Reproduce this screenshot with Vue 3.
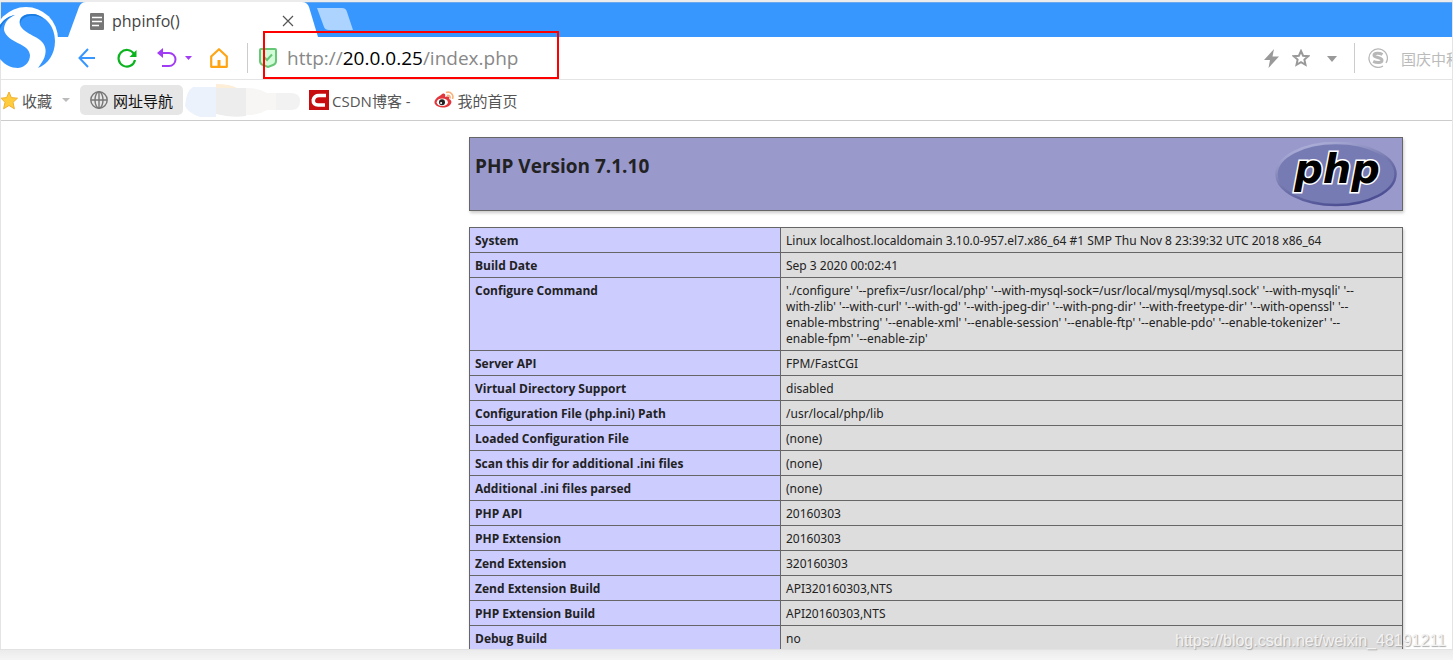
<script setup>
const rows = [
  ['System', 'Linux localhost.localdomain 3.10.0-957.el7.x86_64 #1 SMP Thu Nov 8 23:39:32 UTC 2018 x86_64'],
  ['Build Date', 'Sep 3 2020 00:02:41'],
  [
    'Configure Command',
    "'./configure' '--prefix=/usr/local/php' '--with-mysql-sock=/usr/local/mysql/mysql.sock' '--with-mysqli' '--\n" +
      "with-zlib' '--with-curl' '--with-gd' '--with-jpeg-dir' '--with-png-dir' '--with-freetype-dir' '--with-openssl' '--\n" +
      "enable-mbstring' '--enable-xml' '--enable-session' '--enable-ftp' '--enable-pdo' '--enable-tokenizer' '--\n" +
      "enable-fpm' '--enable-zip'",
  ],
  ['Server API', 'FPM/FastCGI'],
  ['Virtual Directory Support', 'disabled'],
  ['Configuration File (php.ini) Path', '/usr/local/php/lib'],
  ['Loaded Configuration File', '(none)'],
  ['Scan this dir for additional .ini files', '(none)'],
  ['Additional .ini files parsed', '(none)'],
  ['PHP API', '20160303'],
  ['PHP Extension', '20160303'],
  ['Zend Extension', '320160303'],
  ['Zend Extension Build', 'API320160303,NTS'],
  ['PHP Extension Build', 'API20160303,NTS'],
  ['Debug Build', 'no'],
]
</script>

<template>
  <div class="window">
    <header class="chrome">
      <svg class="logo" width="60" height="66" viewBox="0 5 60 66" aria-hidden="true">
        <circle cx="26" cy="39" r="32" fill="#fff" />
        <path d="M20 25C18 17 24 14 32 14C46 15 55 27 55 41C55 54 48 64 38 68C44 60 47 54 45 47C42 36 24 35 20 25Z" fill="#3897ff" />
        <path d="M20 24C19 17 25 14 32 14C37 14 41 16 44 19C36 14 22 14 20 24Z" fill="#1a7be0" />
        <path d="M15 15C9 16 4 19 0 25V59C5 65 11 68 18 68C26 67 30 61 30 55C29 43 7 43 4 30C4 23 8 18 15 15Z" fill="#3897ff" />
        <path d="M15 15C9 16 4 19 0 25V29C3 22 8 17 15 15Z" fill="#1a7be0" />
      </svg>
      <div class="tabs">
        <svg class="tab-shape" width="250" height="35" viewBox="0 0 250 35" aria-hidden="true">
          <path d="M0 35L11 5Q13 0 18 0H234Q239 0 241 5L250 35Z" fill="#fff" />
        </svg>
        <div class="tab">
          <svg width="14" height="17" viewBox="0 0 14 17" aria-hidden="true">
            <rect width="14" height="17" rx="1" fill="#777" />
            <path d="M2 4.5H12M2 8.5H12M2 12.5H9" stroke="#fff" stroke-width="1.5" />
          </svg>
          <span class="tab-title">phpinfo()</span>
          <button class="plain" aria-label="Close tab">
            <svg width="12" height="12" viewBox="0 0 12 12"><path d="M1 1L11 11M11 1L1 11" stroke="#555" stroke-width="1.2" /></svg>
          </button>
        </div>
        <button class="plain new-tab" aria-label="New tab">
          <svg width="36" height="22" viewBox="0 0 36 22"><path d="M0 0H25Q29 0 30 4L36 22H12Q8 22 7 19Z" fill="#add3ff" /></svg>
        </button>
      </div>

      <div class="toolbar">
        <button class="plain back" aria-label="Back">
          <svg width="18" height="20" viewBox="0 0 18 20"><path d="M10 1L1.5 10L10 19M1.5 10H17" fill="none" stroke="#3897ff" stroke-width="2" /></svg>
        </button>
        <button class="plain reload" aria-label="Reload">
          <svg width="20" height="20" viewBox="0 0 20 20"><path d="M17 6A8.3 8.3 0 1 0 18 12" fill="none" stroke="#0bb41f" stroke-width="2.2" /><path d="M19.5 2V9H12.5Z" fill="#0bb41f" /></svg>
        </button>
        <button class="plain undo" aria-label="Undo">
          <svg width="20" height="20" viewBox="0 0 20 20"><path d="M4 5H12A6 6 0 0 1 12 18H5" fill="none" stroke="#a13cf5" stroke-width="2" /><path d="M0 5L6 0V10Z" fill="#a13cf5" /></svg>
        </button>
        <button class="plain undo-more" aria-label="Undo list">
          <svg width="7" height="4" viewBox="0 0 7 4"><path d="M0 0H7L3.5 4Z" fill="#a13cf5" /></svg>
        </button>
        <button class="plain home" aria-label="Home">
          <svg width="18" height="20" viewBox="0 0 18 20"><path d="M1.2 8.5L9 1.2L16.8 8.5V18.8H1.2Z" fill="none" stroke="#ffa514" stroke-width="2.2" stroke-linejoin="round" /><path d="M9 12V18" stroke="#ffa514" stroke-width="3" /></svg>
        </button>
        <i class="divider"></i>
        <svg class="shield" width="18" height="20" viewBox="0 0 18 20" aria-hidden="true">
          <path d="M1 2Q1 1 2 1H16Q17 1 17 2V13Q17 16 14 17L9 19L4 17Q1 16 1 13Z" fill="#d2fbd8" stroke="#67c777" stroke-width="2" />
          <path d="M5 9L8 12L13 6.5" fill="none" stroke="#67c777" stroke-width="2" />
        </svg>
        <div class="url">http://<b>20.0.0.25</b>/index.php</div>
        <div class="tools">
          <svg width="15" height="19" viewBox="0 0 15 19" aria-hidden="true"><path d="M10 0L0 11H6L4.5 19L15 7.5H8.5Z" fill="#999" /></svg>
          <button class="plain star" aria-label="Add to favourites">
            <svg width="18" height="18" viewBox="0 0 18 18"><path d="M9 2L11.1 6.7L16.2 7.2L12.4 10.6L13.5 15.8L9 13.1L4.5 15.8L5.6 10.6L1.8 7.2L6.9 6.7Z" fill="none" stroke="#999" stroke-width="2" /></svg>
          </button>
          <button class="plain more" aria-label="More">
            <svg width="10" height="6" viewBox="0 0 10 6"><path d="M0 0H10L5 6Z" fill="#999" /></svg>
          </button>
          <i class="divider"></i>
          <svg class="sogou" width="20" height="20" viewBox="0 0 20 20" aria-hidden="true">
            <path d="M15 18A9.2 9.2 0 1 1 18 15" fill="none" stroke="#b8b8b8" stroke-width="1.3" />
            <path d="M14.5 6.5C12 5 6 4.5 6 7.2C6 10 14 9 14 12.2C14 15.5 8 14.8 5.2 13.4" fill="none" stroke="#b8b8b8" stroke-width="3" />
          </svg>
          <span class="search">国庆中秋</span>
        </div>
        <div class="highlight"></div>
      </div>

      <nav class="bookmarks">
        <button class="plain fav">
          <svg width="18" height="19" viewBox="0 0 18 19" aria-hidden="true"><path d="M8 1L10.4 6.6L16.5 7.2L12 11.3L13.4 17.8L8 14.5L2.6 17.8L4 11.3L0 7.2L5.6 6.6Z" fill="#ffcc3d" stroke="#f0b030" /></svg>
          <span>收藏</span>
          <svg class="fav-caret" width="8" height="4" viewBox="0 0 8 4" aria-hidden="true"><path d="M0 0H8L4 4Z" fill="#bbb" /></svg>
        </button>
        <a class="nav-site" href="#">
          <svg width="18" height="18" viewBox="0 0 18 18" aria-hidden="true"><g fill="none" stroke="#777" stroke-width="1.4"><circle cx="9" cy="9" r="8.2" /><ellipse cx="9" cy="9" rx="4" ry="8.2" /><path d="M9 1V17M1 9H17" /></g></svg>
          <span>网址导航</span>
        </a>
        <svg class="smudge" width="116" height="33" viewBox="0 0 116 33" aria-hidden="true">
          <path d="M8 3H31V33H15Q3 29 0 22Q1 7 8 3Z" fill="#ecf2fc" />
          <path d="M31 0Q45 0 52 4H31Z" fill="#fdeed8" />
          <path d="M31 4H61V32Q46 34 31 30Z" fill="#ededee" />
          <path d="M61 4Q74 4 82 9H91V26H82Q74 31 61 31Z" fill="#f7f6f5" />
          <path d="M91 9H106Q115 9 115 17Q115 26 106 26H91Z" fill="#f2f2f3" />
        </svg>
        <a class="csdn" href="#">
          <svg width="20" height="20" viewBox="0 0 20 20" aria-hidden="true"><rect width="20" height="20" fill="#c80d10" /><path d="M17 5.5H10C6.5 5.5 5 7 4.3 10C4 13.5 6 15 9 15H16" fill="none" stroke="#fff" stroke-width="3.6" /></svg>
          <span>CSDN博客 -</span>
        </a>
        <a class="weibo" href="#">
          <svg width="20" height="18" viewBox="0 0 20 18" aria-hidden="true">
            <path d="M7 4C10 1 12 3 11 6C15 5 16 6 15 8C18 9 18 12 16 14C12 18 3 17 1 13C-1 10 3 6 7 4Z" fill="#e0363c" />
            <ellipse cx="8.3" cy="11.2" rx="5.6" ry="3.8" fill="#fff" />
            <circle cx="8" cy="11.3" r="3" fill="#222" /><circle cx="7.1" cy="12" r="1" fill="#fff" />
            <path d="M12 1.5C17 0 20 4 18.5 8M13 4.5C15.5 4 16.5 5.5 16 7.5" fill="none" stroke="#f8b27c" stroke-width="1.6" />
          </svg>
          <span>我的首页</span>
        </a>
      </nav>
    </header>

    <main class="page">
      <div class="info">
        <div class="banner">
          <h1>PHP Version 7.1.10</h1>
          <svg class="php-logo" width="122" height="65" viewBox="0 0 122 65" role="img" aria-label="PHP logo">
            <defs>
              <linearGradient id="rim" x1="0.2" y1="0" x2="0.7" y2="1">
                <stop offset="0" stop-color="#b2b4dc" />
                <stop offset="0.5" stop-color="#7377ad" />
                <stop offset="1" stop-color="#484a90" />
              </linearGradient>
            </defs>
            <ellipse cx="61" cy="32" rx="59.5" ry="31" fill="#777bb3" stroke="url(#rim)" stroke-width="2.5" />
            <text class="php" x="62" y="41" text-anchor="middle">php</text>
          </svg>
        </div>
        <table>
          <tbody>
            <tr v-for="[name, value] in rows" :key="name">
              <th scope="row">{{ name }}</th>
              <td>{{ value }}</td>
            </tr>
          </tbody>
        </table>
      </div>
    </main>
    <footer class="status"></footer>
    <div class="watermark">https://blog.csdn.net/weixin_48191211</div>
  </div>
</template>

<style>
body {
  margin: 0;
  background: #fff;
}
</style>

<style scoped>
.window {
  position: relative;
  box-sizing: border-box;
  height: 100vh;
  display: flex;
  flex-direction: column;
  overflow: hidden;
  border-top: 2px solid #ececec;
  font-family: "Open Sans", "Noto Sans CJK SC", sans-serif;
}
.plain {
  border: 0;
  padding: 0;
  background: none;
  display: flex;
  align-items: center;
  font: inherit;
  color: inherit;
  flex: none;
}
svg {
  display: block;
  flex: none;
}
.chrome {
  position: relative;
  border-left: 1px solid #e4e4e4;
  border-right: 1px solid #e4e4e4;
}
.logo {
  position: absolute;
  left: -1px;
  top: 3px;
}
.tabs {
  position: relative;
  z-index: -1;
  height: 35px;
  background: #3897ff;
  display: flex;
  padding-left: 67px;
}
.tab-shape {
  position: absolute;
  left: 67px;
  top: 0;
}
.tabs::before {
  content: "";
  position: absolute;
  left: 0;
  top: 0;
  width: 100%;
  border-top: 1px solid #6ba9ee;
}
.tab {
  position: relative;
  box-sizing: border-box;
  width: 249px;
  height: 38px;
  padding: 0 23px 0 22px;
  display: flex;
  align-items: center;
  font-size: 16px;
  color: #444;
}
.tab-title {
  flex: 1;
  padding-left: 8px;
}
.new-tab {
  height: 22px;
  margin-top: 6px;
}
.toolbar {
  position: relative;
  height: 42px;
  display: flex;
  align-items: center;
  border-bottom: 1px solid #e4e4e4;
  padding-left: 77px;
}
.reload {
  margin-left: 21px;
}
.undo {
  margin-left: 20px;
}
.undo-more {
  margin-left: 8px;
}
.home {
  margin-left: 18px;
}
.divider {
  width: 1px;
  height: 30px;
  background: #ccc;
  flex: none;
}
.home + .divider {
  margin-left: 19px;
}
.shield {
  margin-left: 11px;
}
.url {
  margin-left: 10px;
  flex: 1;
  font-size: 19px;
  color: #888;
  white-space: nowrap;
}
.url b {
  font-weight: 400;
  color: #000;
}
.tools {
  display: flex;
  align-items: center;
  width: 188px;
  overflow: hidden;
  flex: none;
}
.star {
  margin-left: 13px;
}
.more {
  margin: 2px 17px 0 17px;
}
.more + .divider {
  margin-right: 13px;
}
.search {
  margin-left: 13px;
  font-size: 15px;
  color: #bbb;
  white-space: nowrap;
}
.highlight {
  position: absolute;
  box-sizing: border-box;
  left: 262px;
  top: -6px;
  width: 296px;
  height: 48px;
  border: 2px solid #f00;
}
.bookmarks {
  height: 40px;
  display: flex;
  align-items: center;
  border-bottom: 1px solid #ccc;
  font-size: 15px;
  color: #555;
  white-space: nowrap;
}
.bookmarks a {
  display: flex;
  align-items: center;
  color: inherit;
  text-decoration: none;
}
.fav span {
  margin-left: 3px;
}
.fav-caret {
  margin-left: 10px;
}
.bookmarks .nav-site {
  box-sizing: border-box;
  height: 30px;
  margin-left: 10px;
  padding: 0 10px;
  gap: 5px;
  border-radius: 5px;
  background: #e6e6e6;
  color: #111;
}
.smudge {
  margin-left: 2px;
}
.bookmarks .csdn {
  margin-left: 8px;
  gap: 3px;
}
.bookmarks .weibo {
  margin-left: 23px;
  gap: 4px;
}
.page {
  flex: 1;
  min-height: 0;
  overflow: hidden;
  padding: 16px 49px 0 468px;
  border-left: 1px solid #e4e4e4;
  border-right: 1px solid #e4e4e4;
  color: #222;
}
.banner {
  box-sizing: border-box;
  height: 74px;
  display: flex;
  justify-content: space-between;
  align-items: flex-start;
  padding: 4px 5px;
  border: 1px solid #666;
  background: #99c;
  box-shadow: 1px 2px 3px #ccc;
}
h1 {
  margin: 12px 0 0;
  font-size: 19px;
  line-height: 24px;
}
.php-logo {
  overflow: visible;
}
.php {
  font: italic 700 40px "DejaVu Sans", sans-serif;
  fill: #000;
  stroke: #fff;
  stroke-width: 3px;
  paint-order: stroke;
}
table {
  width: 100%;
  margin-top: 16px;
  border-collapse: collapse;
  table-layout: fixed;
  box-shadow: 1px 2px 3px #ccc;
  font-size: 12px;
  line-height: 16px;
}
th,
td {
  border: 1px solid #666;
  padding: 5px 5px 3px;
  vertical-align: top;
  text-align: left;
}
th {
  width: 300px;
  background: #ccf;
}
td {
  background: #ddd;
  font-family: "Noto Sans", sans-serif;
  white-space: pre;
}
.status {
  height: 10px;
  border-top: 1px solid #e2e2e2;
  background: linear-gradient(#ebebeb, #f5f5f5);
}
.watermark {
  position: absolute;
  right: 7px;
  bottom: 10px;
  font: 16px/18px "Liberation Sans", sans-serif;
  color: #f2f2f2;
  text-shadow: 1px 1px 1px #aaa;
}
</style>
